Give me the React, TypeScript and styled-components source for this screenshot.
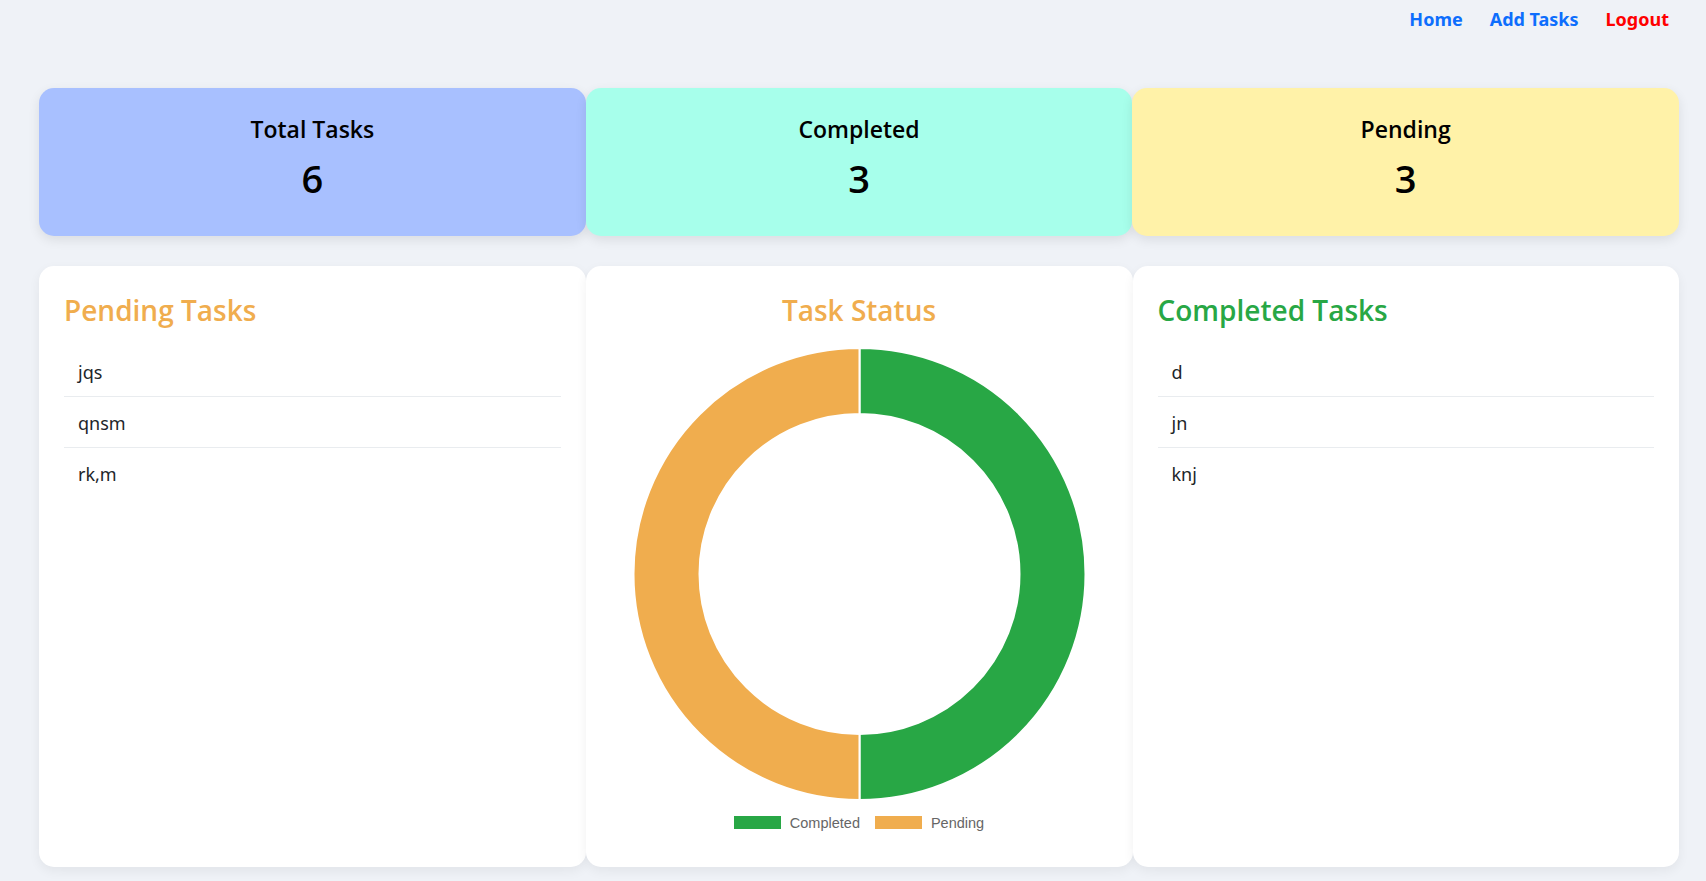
import React from "react";
import styled, { createGlobalStyle } from "styled-components";

const GlobalStyle = createGlobalStyle`
  * { box-sizing: border-box; }
  html, body {
    margin: 0;
    padding: 0;
    background: #eff2f7;
    font-family: "Noto Sans", "Open Sans", sans-serif;
    color: #212529;
  }
`;

const Page = styled.div`
  min-height: 881px;
  background: #eff2f7;
`;

const Nav = styled.nav`
  display: flex;
  justify-content: flex-end;
  align-items: center;
  gap: 27px;
  padding: 7px 37px 0 0;
  height: 32px;
`;

const NavLink = styled.a<{ $danger?: boolean }>`
  font-size: 18px;
  line-height: 25px;
  font-weight: 700;
  text-decoration: none;
  color: ${(p) => (p.$danger ? "#ff0000" : "#0d6efd")};
  cursor: pointer;
`;

const Main = styled.main`
  padding: 56px 27px 0 39px;
`;

const StatGrid = styled.section`
  display: grid;
  grid-template-columns: repeat(3, 1fr);
  gap: 0;
`;

const StatCard = styled.div<{ $bg: string }>`
  height: 148px;
  border-radius: 15px;
  background: ${(p) => p.$bg};
  box-shadow: 0 4px 12px rgba(0, 0, 0, 0.09);
  display: flex;
  flex-direction: column;
  align-items: center;
  padding-top: 25px;
  font-family: "Open Sans", "Noto Sans", sans-serif;
`;

const StatTitle = styled.div`
  font-size: 23px;
  line-height: 32px;
  font-weight: 600;
  color: #000;
`;

const StatValue = styled.div`
  margin-top: 8px;
  font-size: 38px;
  line-height: 50px;
  font-weight: 600;
  color: #000;
`;

const PanelGrid = styled.section`
  margin-top: 30px;
  display: grid;
  grid-template-columns: repeat(3, 1fr);
  gap: 0;
`;

const Panel = styled.div`
  height: 601px;
  background: #fff;
  border-radius: 15px;
  box-shadow: 0 4px 12px rgba(0, 0, 0, 0.06);
  padding: 25px;
  display: flex;
  flex-direction: column;
`;

const PanelTitle = styled.h2<{ $color: string; $center?: boolean }>`
  margin: 0 0 17px;
  font-family: "Open Sans", "Noto Sans", sans-serif;
  font-size: 28px;
  line-height: 38px;
  font-weight: 600;
  color: ${(p) => p.$color};
  text-align: ${(p) => (p.$center ? "center" : "left")};
`;

const ChartTitle = styled(PanelTitle)`
  margin-bottom: 16px;
`;

const TaskList = styled.ul`
  list-style: none;
  margin: 0;
  padding: 0;
`;

const TaskItem = styled.li`
  font-size: 18px;
  line-height: 25px;
  padding: 14px 14px 11px;
  border-bottom: 1px solid #e9ecef;
  color: #212529;
  &:last-child {
    border-bottom: none;
  }
`;

const ChartBox = styled.div`
  display: flex;
  flex-direction: column;
  align-items: center;
  height: 497px;
`;

const Donut = styled.svg`
  display: block;
  flex: none;
`;

const Legend = styled.div`
  height: 41px;
  display: flex;
  align-items: center;
  justify-content: center;
  gap: 15px;
  padding-top: 2px;
  font-family: "Liberation Sans", Arial, sans-serif;
  font-size: 14.5px;
  color: #666;
`;

const LegendItem = styled.div`
  display: flex;
  align-items: center;
  gap: 9px;
`;

const Swatch = styled.span<{ $color: string }>`
  display: inline-block;
  width: 47px;
  height: 13px;
  background: ${(p) => p.$color};
`;

const GREEN = "#28a745";
const ORANGE = "#f0ad4e";

const pending = ["jqs", "qnsm", "rk,m"];
const completed = ["d", "jn", "knj"];

function DonutChart() {
  const w = 497;
  const h = 456;
  const cx = 248.5;
  const cy = 229;
  const R = 226;
  const r = 160;
  const right = `M ${cx} ${cy - R} A ${R} ${R} 0 0 1 ${cx} ${cy + R} L ${cx} ${cy + r} A ${r} ${r} 0 0 0 ${cx} ${cy - r} Z`;
  const left = `M ${cx} ${cy + R} A ${R} ${R} 0 0 1 ${cx} ${cy - R} L ${cx} ${cy - r} A ${r} ${r} 0 0 0 ${cx} ${cy + r} Z`;
  return (
    <Donut width={w} height={h} viewBox={`0 0 ${w} ${h}`}>
      <path d={right} fill={GREEN} stroke="#fff" strokeWidth={2} />
      <path d={left} fill={ORANGE} stroke="#fff" strokeWidth={2} />
    </Donut>
  );
}

export default function App() {
  return (
    <Page>
      <GlobalStyle />
      <Nav>
        <NavLink>Home</NavLink>
        <NavLink>Add Tasks</NavLink>
        <NavLink $danger>Logout</NavLink>
      </Nav>
      <Main>
        <StatGrid>
          <StatCard $bg="#a8c0ff">
            <StatTitle>Total Tasks</StatTitle>
            <StatValue>6</StatValue>
          </StatCard>
          <StatCard $bg="#a7ffeb">
            <StatTitle>Completed</StatTitle>
            <StatValue>3</StatValue>
          </StatCard>
          <StatCard $bg="#fff2a8">
            <StatTitle>Pending</StatTitle>
            <StatValue>3</StatValue>
          </StatCard>
        </StatGrid>
        <PanelGrid>
          <Panel>
            <PanelTitle $color={ORANGE}>Pending Tasks</PanelTitle>
            <TaskList>
              {pending.map((t) => (
                <TaskItem key={t}>{t}</TaskItem>
              ))}
            </TaskList>
          </Panel>
          <Panel>
            <ChartTitle $color={ORANGE} $center>
              Task Status
            </ChartTitle>
            <ChartBox>
              <DonutChart />
              <Legend>
                <LegendItem>
                  <Swatch $color={GREEN} />
                  Completed
                </LegendItem>
                <LegendItem>
                  <Swatch $color={ORANGE} />
                  Pending
                </LegendItem>
              </Legend>
            </ChartBox>
          </Panel>
          <Panel>
            <PanelTitle $color={GREEN}>Completed Tasks</PanelTitle>
            <TaskList>
              {completed.map((t) => (
                <TaskItem key={t}>{t}</TaskItem>
              ))}
            </TaskList>
          </Panel>
        </PanelGrid>
      </Main>
    </Page>
  );
}
